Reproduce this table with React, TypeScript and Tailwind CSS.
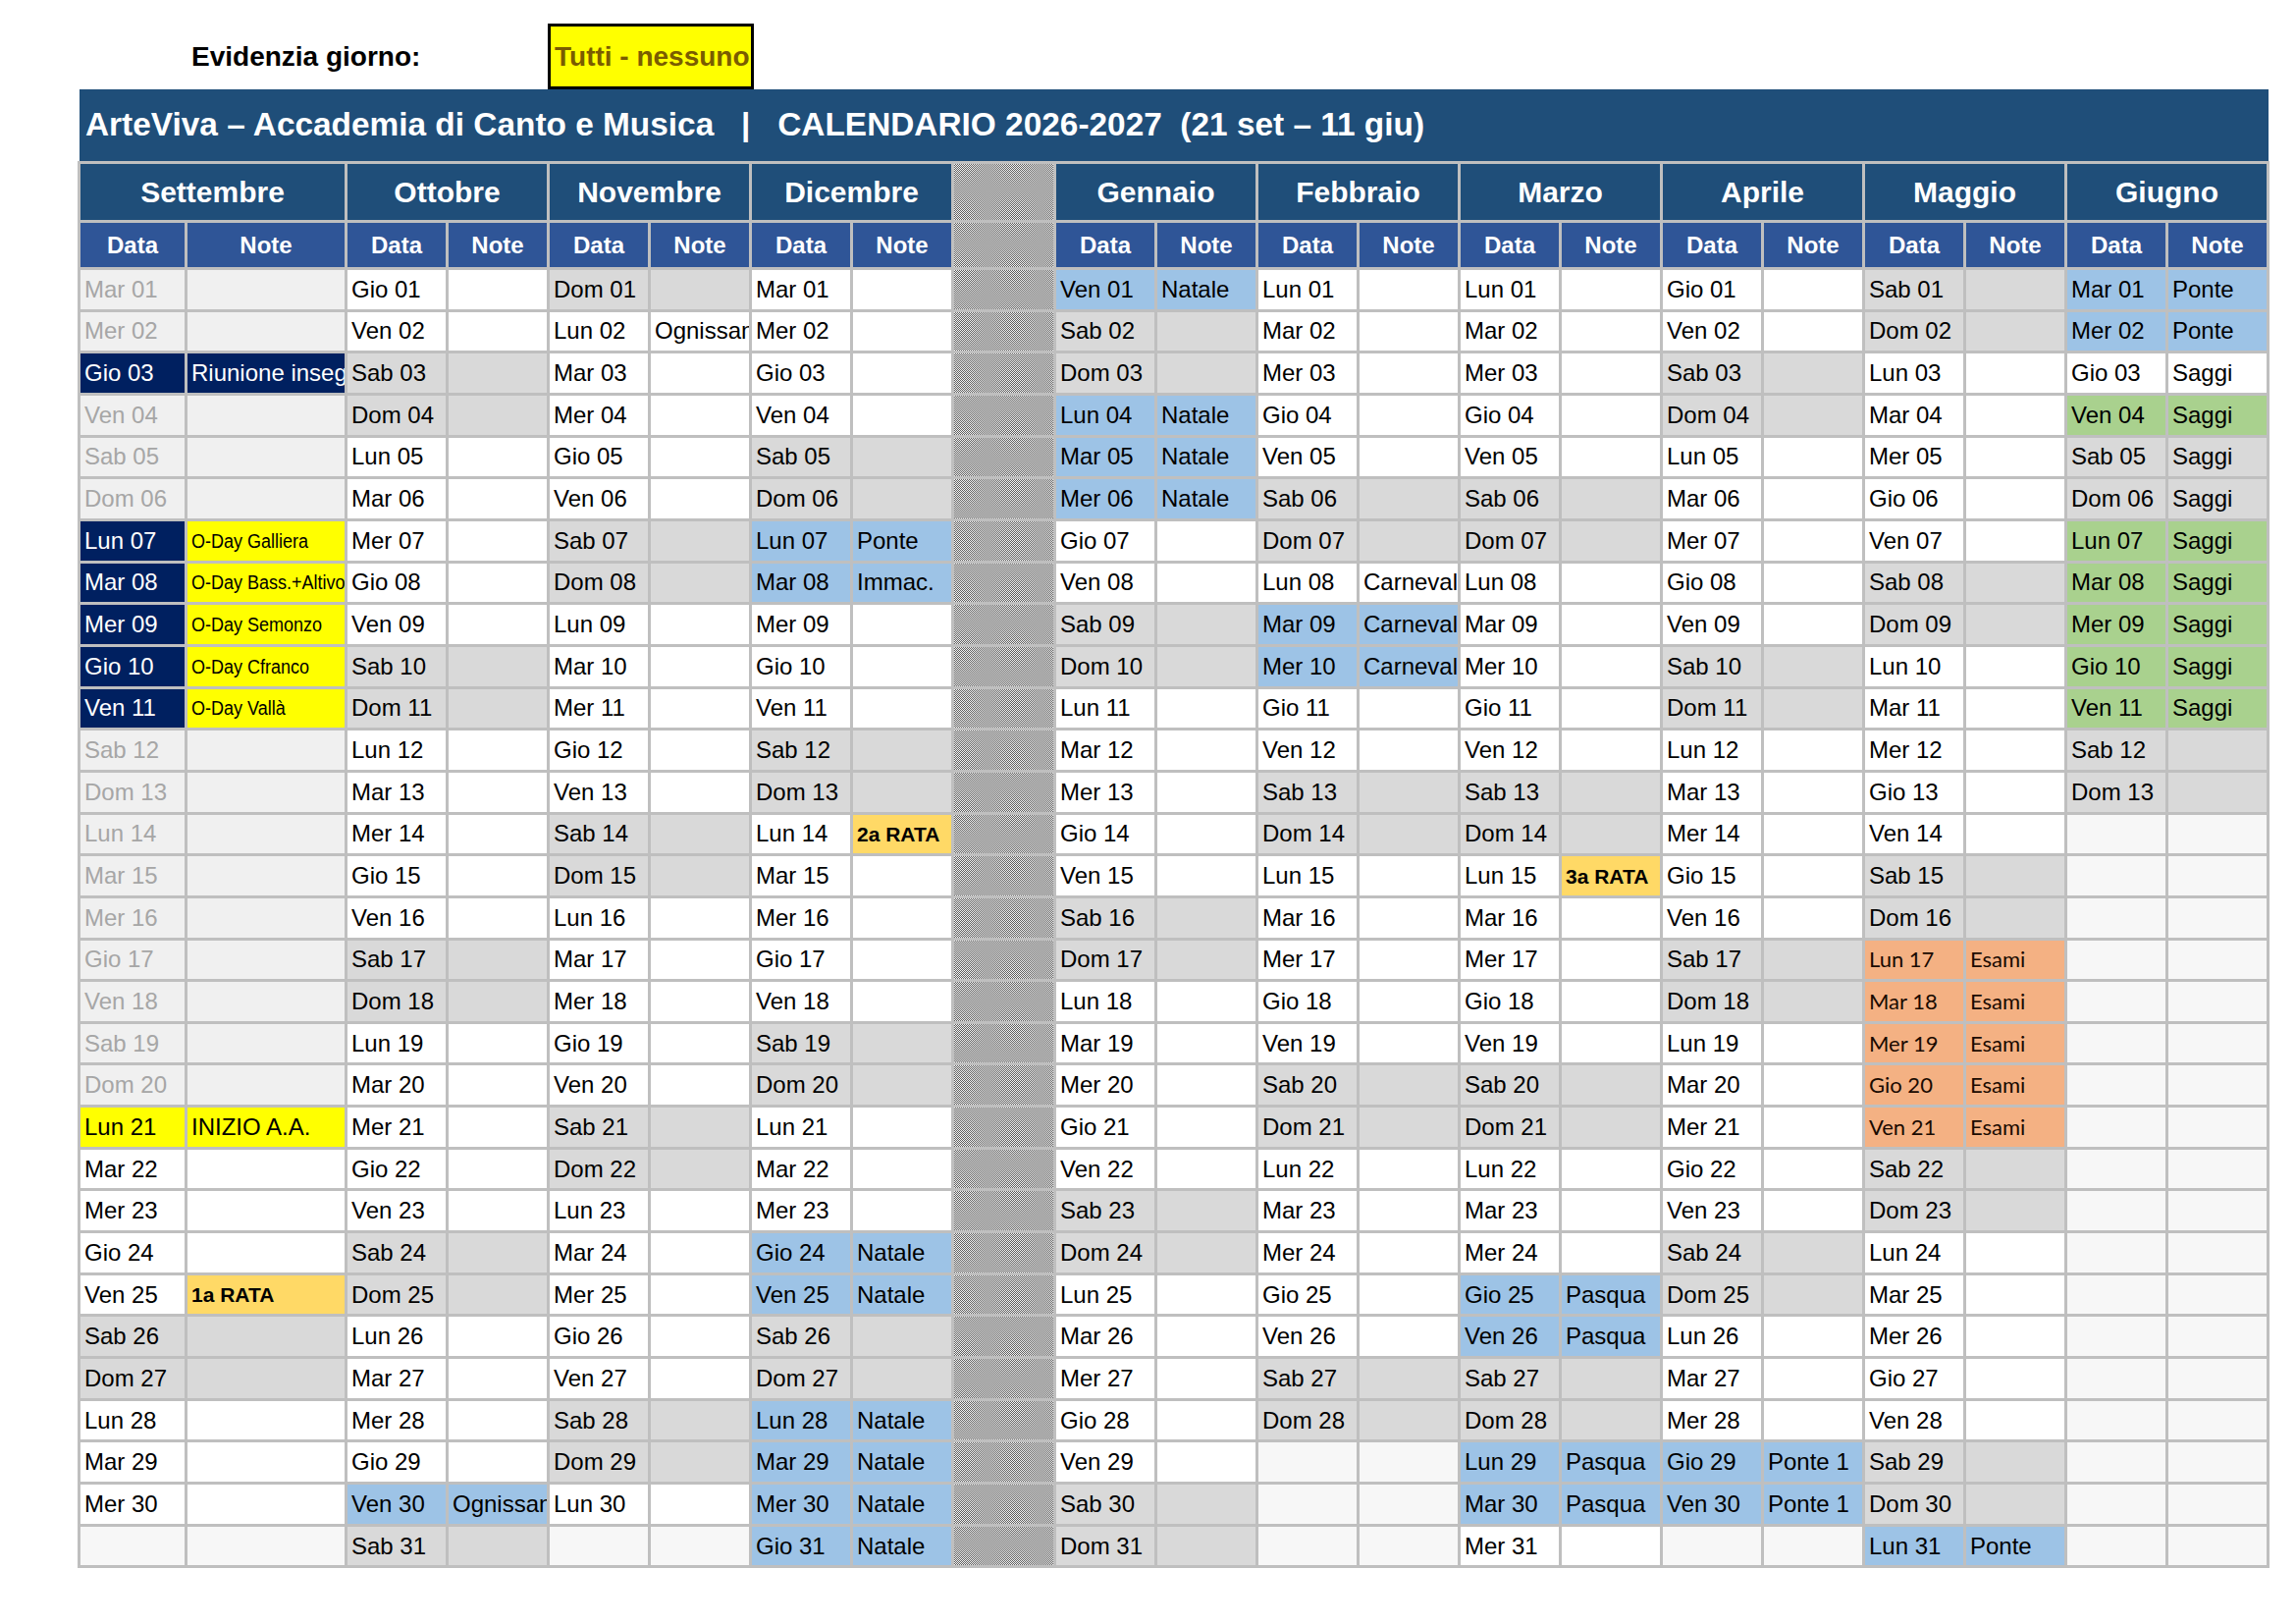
import React from "react";

const DAYS = ["Dom", "Lun", "Mar", "Mer", "Gio", "Ven", "Sab"];

const KIND: Record<string, string> = {
  pre: "bg-[#f0f0f0] text-[#a6a6a6]",
  we: "bg-[#d9d9d9] text-black",
  norm: "bg-white text-black",
  empty: "bg-[#f7f7f7]",
  navy: "bg-[#002060] text-white",
  yellow: "bg-[#ffff00] text-black",
  blue: "bg-[#9dc3e6] text-black",
  orange: "bg-[#ffd966] text-black",
  esami: "bg-[#f4b183] text-[#1a0a00]",
  green: "bg-[#a9d18e] text-black",
};

type Font = "normal" | "small" | "bold" | "calibri";

interface Ov {
  dataKind?: string;
  noteKind?: string;
  note?: string;
  dataFont?: Font;
  noteFont?: Font;
}

interface Month {
  name: string;
  y: number;
  m: number;
  last?: number;
}

const MONTHS: Month[] = [
  { name: "Settembre", y: 2026, m: 8 },
  { name: "Ottobre", y: 2026, m: 9 },
  { name: "Novembre", y: 2026, m: 10 },
  { name: "Dicembre", y: 2026, m: 11 },
  { name: "Gennaio", y: 2027, m: 0 },
  { name: "Febbraio", y: 2027, m: 1 },
  { name: "Marzo", y: 2027, m: 2 },
  { name: "Aprile", y: 2027, m: 3 },
  { name: "Maggio", y: 2027, m: 4 },
  { name: "Giugno", y: 2027, m: 5, last: 13 },
];

const OV: Record<string, Ov> = {};
const set = (m: number, days: number[], o: Ov) => {
  days.forEach((d) => {
    OV[m + "-" + d] = o;
  });
};

// Settembre
set(8, [3], { dataKind: "navy", noteKind: "navy", note: "Riunione insegnanti" });
const oday: [number, string][] = [
  [7, "O-Day Galliera"],
  [8, "O-Day Bass.+Altivo"],
  [9, "O-Day Semonzo"],
  [10, "O-Day Cfranco"],
  [11, "O-Day Vallà"],
];
oday.forEach(([d, t]) => set(8, [d], { dataKind: "navy", noteKind: "yellow", note: t, noteFont: "small" }));
set(8, [21], { dataKind: "yellow", noteKind: "yellow", note: "INIZIO A.A." });
set(8, [25], { noteKind: "orange", note: "1a RATA", noteFont: "bold" });
// Ottobre
set(9, [30], { dataKind: "blue", noteKind: "blue", note: "Ognissanti" });
// Novembre
set(10, [2], { note: "Ognissanti" });
// Dicembre
set(11, [7], { dataKind: "blue", noteKind: "blue", note: "Ponte" });
set(11, [8], { dataKind: "blue", noteKind: "blue", note: "Immac." });
set(11, [14], { noteKind: "orange", note: "2a RATA", noteFont: "bold" });
set(11, [24, 25, 28, 29, 30, 31], { dataKind: "blue", noteKind: "blue", note: "Natale" });
// Gennaio
set(0, [1, 4, 5, 6], { dataKind: "blue", noteKind: "blue", note: "Natale" });
// Febbraio
set(1, [8], { note: "Carnevale" });
set(1, [9, 10], { dataKind: "blue", noteKind: "blue", note: "Carnevale" });
// Marzo
set(2, [15], { noteKind: "orange", note: "3a RATA", noteFont: "bold" });
set(2, [25, 26, 29, 30], { dataKind: "blue", noteKind: "blue", note: "Pasqua" });
// Aprile
set(3, [29, 30], { dataKind: "blue", noteKind: "blue", note: "Ponte 1" });
// Maggio
set(4, [17, 18, 19, 20, 21], {
  dataKind: "esami",
  noteKind: "esami",
  note: "Esami",
  dataFont: "calibri",
  noteFont: "calibri",
});
set(4, [31], { dataKind: "blue", noteKind: "blue", note: "Ponte" });
// Giugno
set(5, [1, 2], { dataKind: "blue", noteKind: "blue", note: "Ponte" });
set(5, [3], { note: "Saggi" });
set(5, [4, 7, 8, 9, 10, 11], { dataKind: "green", noteKind: "green", note: "Saggi" });
set(5, [5, 6], { note: "Saggi" });

const HATCH =
  "bg-[#aaaaaa] bg-[image:repeating-conic-gradient(#5e5e5e_0%_25%,#f4f4f4_0%_50%)] bg-[length:2px_2px]";

const CELL = "flex items-center px-[4px] overflow-hidden whitespace-nowrap leading-none";

function Text({ text, font }: { text: string; font?: Font }) {
  if (font === "small")
    return (
      <span className="inline-block origin-left scale-x-[0.9] text-[20px] font-['Liberation_Sans',Arial,sans-serif]">
        {text}
      </span>
    );
  if (font === "bold") return <span className="text-[21px] font-bold">{text}</span>;
  if (font === "calibri")
    return <span className="text-[22px] font-['Lato','Open_Sans',sans-serif]">{text}</span>;
  return <span className="text-[24px]">{text}</span>;
}

export default function App() {
  const cells: React.ReactNode[] = [];

  // header row 1: months
  MONTHS.forEach((mo, i) => {
    if (i === 4) cells.push(<div key="h1-hatch" className={HATCH} />);
    cells.push(
      <div
        key={"h1-" + i}
        className="col-span-2 flex items-center justify-center bg-[#1f4e79] text-[30px] font-bold text-white"
      >
        {mo.name}
      </div>
    );
  });

  // header row 2: Data / Note
  MONTHS.forEach((_, i) => {
    if (i === 4) cells.push(<div key="h2-hatch" className={HATCH} />);
    cells.push(
      <div key={"h2d-" + i} className="flex items-center justify-center bg-[#2f5597] text-[24px] font-bold text-white">
        Data
      </div>
    );
    cells.push(
      <div key={"h2n-" + i} className="flex items-center justify-center bg-[#2f5597] text-[24px] font-bold text-white">
        Note
      </div>
    );
  });

  for (let d = 1; d <= 31; d++) {
    MONTHS.forEach((mo, i) => {
      if (i === 4) cells.push(<div key={"hatch-" + d} className={HATCH} />);
      const dim = new Date(mo.y, mo.m + 1, 0).getDate();
      const lastDay = mo.last ?? dim;
      if (d > lastDay) {
        cells.push(<div key={`d-${i}-${d}`} className={KIND.empty} />);
        cells.push(<div key={`n-${i}-${d}`} className={KIND.empty} />);
        return;
      }
      const wd = new Date(mo.y, mo.m, d).getDay();
      let base = wd === 0 || wd === 6 ? "we" : "norm";
      if (mo.m === 8 && d <= 20) base = "pre";
      const o = OV[mo.m + "-" + d] || {};
      const dk = o.dataKind ?? base;
      const nk = o.noteKind ?? base;
      const label = DAYS[wd] + " " + String(d).padStart(2, "0");
      cells.push(
        <div key={`d-${i}-${d}`} className={`${CELL} ${KIND[dk]}`}>
          <Text text={label} font={o.dataFont} />
        </div>
      );
      cells.push(
        <div key={`n-${i}-${d}`} className={`${CELL} ${KIND[nk]}`}>
          {o.note ? <Text text={o.note} font={o.noteFont} /> : null}
        </div>
      );
    });
  }

  return (
    <div className="h-[1654px] w-[2339px] bg-white font-['Liberation_Sans',Arial,sans-serif] text-black">
      <div className="flex h-[91px] items-end">
        <div className="flex h-[67px] w-[558px] items-center pl-[195px] text-[28px] font-bold">Evidenzia giorno:</div>
        <div className="flex h-[67px] w-[210px] items-center overflow-hidden whitespace-nowrap border-[3px] border-black bg-[#ffff00] pl-[4px] text-[28px] font-bold text-[#7a5c00]">
          Tutti - nessuno
        </div>
      </div>
      <div className="ml-[79px] w-[2233px]">
        <div className="ml-[2px] flex h-[73px] w-[2230px] items-center whitespace-pre bg-[#1f4e79] pl-[6px] text-[33.4px] font-bold text-white">
          {"ArteViva – Accademia di Canto e Musica   |   CALENDARIO 2026-2027  (21 set – 11 giu)"}
        </div>
        <div className="grid grid-cols-[106px_160px_repeat(6,100px)_101px_repeat(12,100px)] grid-rows-[57px_45px_repeat(31,39.67px)] gap-[3px] bg-[#bfbfbf] p-[3px]">
          {cells}
        </div>
      </div>
    </div>
  );
}
